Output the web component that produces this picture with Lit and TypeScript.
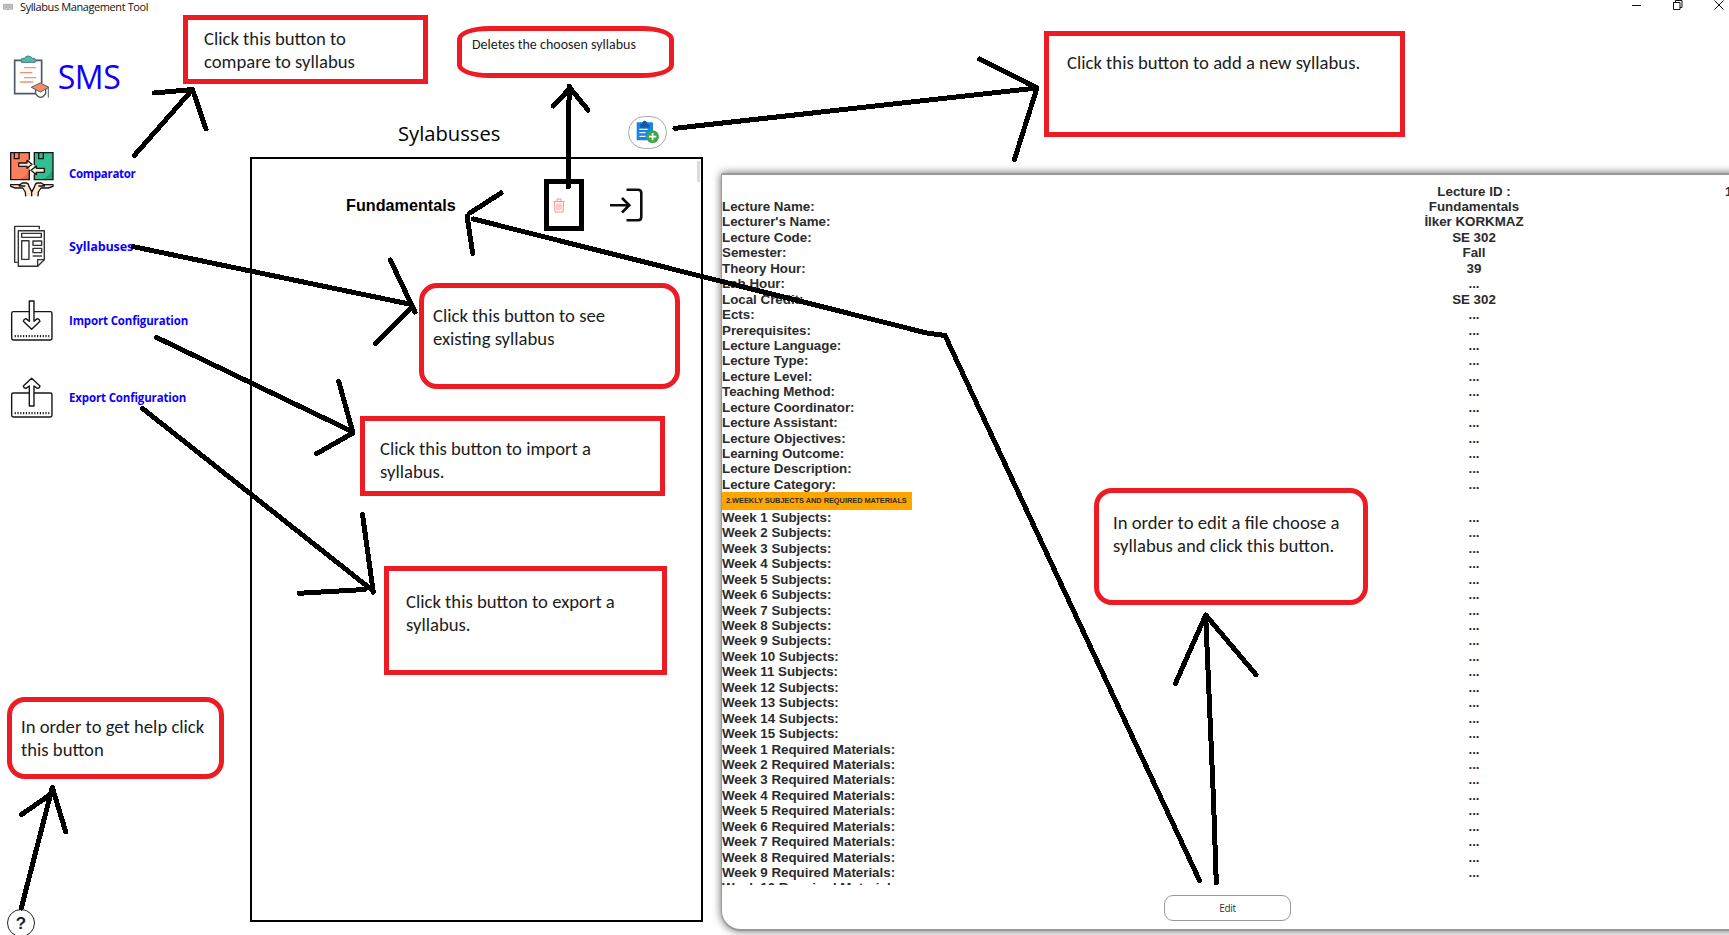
import { LitElement, html, css, svg } from "lit";
import { customElement } from "lit/decorators.js";
import { styleMap } from "lit/directives/style-map.js";

const DETAILS: [string, string][] = [
  ["", "Lecture ID :"],
  ["Lecture Name:", "Fundamentals"],
  ["Lecturer's Name:", "İlker KORKMAZ"],
  ["Lecture Code:", "SE 302"],
  ["Semester:", "Fall"],
  ["Theory Hour:", "39"],
  ["Lab Hour:", "..."],
  ["Local Credit:", "SE 302"],
  ...[
    "Ects:", "Prerequisites:", "Lecture Language:", "Lecture Type:", "Lecture Level:", "Teaching Method:",
    "Lecture Coordinator:", "Lecture Assistant:", "Lecture Objectives:", "Learning Outcome:",
    "Lecture Description:", "Lecture Category:",
  ].map((l): [string, string] => [l, "..."]),
];

const WEEKS: [string, string][] = [
  ...Array.from({ length: 15 }, (_, i): [string, string] => [`Week ${i + 1} Subjects:`, "..."]),
  ...Array.from({ length: 10 }, (_, i): [string, string] => [`Week ${i + 1} Required Materials:`, "..."]),
];

interface Note {
  x: number; y: number; w: number; h: number;
  tx: number; ty: number;
  radius?: string; small?: boolean; lines: string[];
}

// Boxes are placed freely on top of the window; tx/ty is the text inset inside the border.
const NOTES: Note[] = [
  { x: 183, y: 15, w: 245, h: 69, tx: 16, ty: 7, lines: ["Click this button to", "compare to syllabus"] },
  { x: 457, y: 26, w: 217, h: 52, tx: 10, ty: 5, radius: "32px / 13px", small: true, lines: ["Deletes the choosen syllabus"] },
  { x: 1044, y: 31, w: 361, h: 106, tx: 18, ty: 15, lines: ["Click this button to add a new syllabus."] },
  { x: 419, y: 283, w: 261, h: 106, tx: 9, ty: 16, radius: "18px", lines: ["Click this button to see", "existing syllabus"] },
  { x: 360, y: 416, w: 305, h: 80, tx: 15, ty: 16, lines: ["Click this button to import a", "syllabus."] },
  { x: 384, y: 566, w: 283, h: 109, tx: 17, ty: 19, lines: ["Click this button to export a", "syllabus."] },
  { x: 7, y: 697, w: 217, h: 82, tx: 9, ty: 13, radius: "18px", lines: ["In order to get help click", "this button"] },
  { x: 1094, y: 488, w: 274, h: 117, tx: 14, ty: 18, radius: "18px", lines: ["In order to edit a file choose a", "syllabus and click this button."] },
];

const STROKES = [
  "M134.3 155.5L192.5 89.500M154 93L192.5 89.500L206 129",
  "M568.3 187V135L569.3 86M553.3 106L569.3 89M570 88L588 110",
  "M675 128.3L1037 88M979.500 59L1037 88L1014.4 159.500",
  "M133.5 246.7L411.5 304.5M390.3 260L415 312M375.7 343.7L412 307.5",
  "M156.3 337.3L352 431.5M338.7 381.3L353 433L316.5 453.7",
  "M142.3 408.3L372 590M362.5 514.5L373.3 592.3M299 593.3L365 589.5",
  "M21.3 908L52.3 787.5M21.3 814.7L51 794M52.3 787.5L65.7 831.7",
  "M1216.3 883L1213.5 800L1205.7 615.500M1175.3 683.7L1205.7 615L1256 674.7",
  "M1199.6 880.7L945 335.500L926.7 333L473.3 219M501 193L470 213M467 216L472.7 253.3",
];

const bookIcon = html`<svg viewBox="0 0 10 8" width="10" height="8">
  <path d="M.5 1.500Q2.800 .6 5 1.600Q7.200 .6 9.500 1.500V6.400Q7.200 5.600 5 6.700Q2.800 5.600 .5 6.400Z" fill="#d4d4d4" stroke="#9a9a9a" stroke-width=".8"/>
  <path d="M5 1.600V6.700M1.800 2.900H3.900M1.800 4.400H3.900M6.100 2.900H8.200M6.100 4.400H8.200" stroke="#8c8c8c" stroke-width=".6"/>
</svg>`;

const logoIcon = html`<svg viewBox="36 165 112 132" width="37.3" height="44">
  <path d="M41 181H122V282H41Z" fill="#fff"/>
  <path d="M122 250V181H41V281H104" fill="none" stroke="#4c5a64" stroke-width="5"/>
  <path d="M61 187V178Q61 175 65 175H71Q73 168 82 168Q91 168 93 175H99Q103 175 103 178V187Z" fill="#58b9a9" stroke="#3f7f7c" stroke-width="3"/>
  <path d="M69 203H106M57 218H94M69 233H106M57 246H97" stroke="#f5906c" stroke-width="4"/>
  <path d="M104 263V281Q111 292 119 292Q127 292 134 281V263Z" fill="#fff" stroke="#4c5a64" stroke-width="4"/>
  <path d="M91 262L118 249L144 262L118 276Z" fill="#f58b67" stroke="#4c5a64" stroke-width="3"/>
  <path d="M142 263V293" stroke="#4c5a64" stroke-width="3"/>
</svg>`;

const compareIcon = html`<svg viewBox="27 450 138 138" width="46" height="46">
  <path d="M32 455H88V536H32Z" fill="#ff7f5c"/><path d="M88 500V536H52Q82 530 88 500Z" fill="#dd6a4e"/>
  <path d="M103 455H159V536H103Z" fill="#31c08d"/><path d="M159 495V536H122Q153 528 159 495Z" fill="#26a178"/>
  <path d="M88 476V455H32V536H88V506M103 492V455H159V536H103V520" fill="none" stroke="#161616" stroke-width="4"/>
  <path d="M43 456V473H57V456M116 456V473H130V456" fill="none" stroke="#161616" stroke-width="4"/>
  <path d="M56 486H81V478L96 490L81 502V496H56Z" fill="#fbe9d2" stroke="#161616" stroke-width="4" stroke-linejoin="round"/>
  <path d="M133 502H109V495L93 508L109 521V514H133Z" fill="#fbe9d2" stroke="#161616" stroke-width="4" stroke-linejoin="round"/>
  <path d="M77 586L76 573L68 561H46L32 556V551H60L67 546H80Q86 548 87 556L94 570V586" fill="#fbe9d2"/>
  <path d="M114 586L115 573L123 561H145L159 556V551H131L124 546H111Q105 548 104 556L97 570V586" fill="#fbe9d2"/>
  <path d="M77 586L76 573L68 561H46L32 556V551H60L67 546H80Q86 548 87 556L95 572V586M114 586L115 573L123 561H145L159 556V551H131L124 546H111Q105 548 104 556L96 572M56 555H76M135 555H115" fill="none" stroke="#161616" stroke-width="4" stroke-linejoin="round"/>
</svg>`;

const papersIcon = html`<svg viewBox="38 12 100 128" width="33.3" height="42.7" fill="none" stroke="#333" stroke-width="4.200" stroke-linejoin="round">
  <path d="M52 124H43V16H117V25"/>
  <path d="M54 29H132V116L112 136H54Z" fill="#fff"/>
  <path d="M132 116H112V136"/>
  <path d="M64 37H123V49H64ZM64 59H86V115H64ZM98 60H124V73H98ZM98 82H124V95H98Z"/>
  <path d="M97 105H125"/>
</svg>`;

const trayIcon = (up: boolean) => html`<svg viewBox="30 234 130 124" width="43.3" height="41.3" fill="none" stroke="#161616" stroke-width="4.200" stroke-linejoin="round">
  ${up
    ? svg`<rect x="35" y="282" width="121" height="72" rx="5"/>
       <path d="M95 238L120 261Q119 268 112 268L102 261V321H88V261L78 268Q71 268 70 261Z" fill="#fff"/>`
    : svg`<rect x="35" y="269" width="121" height="85" rx="5"/>
       <path d="M88 237H102V298L112 290Q119 291 120 298L95 322L70 298Q71 291 78 290L88 298Z" fill="#fff"/>`}
  <path d="M44 342.500H148" stroke-width="7" stroke-dasharray="3.500 4.900"/>
</svg>`;

const addIcon = html`<svg viewBox="584 362 76 72" width="25.3" height="24">
  <rect x="589" y="369" width="49" height="54" rx="3" fill="#1c83e0"/>
  <path d="M599 385V375H604Q606 364 613 364Q620 364 622 375H627V385Z" fill="#1459ab"/>
  <path d="M597 390H622M597 400H616M597 411H616" stroke="#e6f2ff" stroke-width="4"/>
  <circle cx="637" cy="412" r="19" fill="#3fa548"/>
  <path d="M637 401V423M626 412H648" stroke="#fff" stroke-width="5"/>
</svg>`;

const trashIcon = html`<svg viewBox="0 0 12 15" width="12" height="15" fill="none" stroke="#ff8f8f" stroke-width="1">
  <path d="M.5 3.500H11.500M4 3V1H8V3M1.500 4L2 14H10L10.500 4"/>
  <path d="M4 5.500V12M6 5.500V12M8 5.500V12"/>
</svg>`;

const enterIcon = html`<svg viewBox="0 0 34 34" width="34" height="34" fill="none" stroke="#0c0c0c" stroke-width="2.600">
  <path d="M1 17.300H20M13 10L20.300 17.300L13 24.500"/>
  <path d="M17.500 1.800H29Q32.300 1.800 32.300 5V29Q32.300 32.300 29 32.300H17.500"/>
</svg>`;

@customElement("app-root")
export class AppRoot extends LitElement {
  static styles = css`
    :host {
      display: flex;
      flex-direction: column;
      position: relative;
      width: 1729px;
      height: 935px;
      overflow: hidden;
      background: #fff;
      color: #000;
      font-family: "Segoe UI", "Open Sans", "Noto Sans", sans-serif;
    }
    * { box-sizing: border-box; }
    svg { display: block; flex: none; }
    button { font: inherit; background: none; border: 0; padding: 0; margin: 0; color: inherit; }

    .titlebar { display: flex; align-items: center; height: 14px; flex: none; padding-left: 3px; font-size: 11px; letter-spacing: -0.4px; color: #111; }
    .titlebar .name { margin-left: 7px; line-height: 14px; flex: 1; }
    .controls { display: flex; gap: 31px; padding-right: 5px; margin-top: -4px; }

    .body { display: flex; flex: 1; min-height: 0; }
    .side { width: 250px; flex: none; display: flex; flex-direction: column; color: #0d00ff; }
    .brand { display: flex; align-items: center; gap: 8px; padding: 41px 0 0 12.500px; height: 85px; font-size: 32px; letter-spacing: -0.5px; line-height: 44px; }
    .nav { display: flex; flex-direction: column; padding-top: 38px; }
    .item { display: flex; align-items: center; font-weight: 700; font-size: 11.5px; letter-spacing: -0.15px; line-height: 16px; text-align: left; height: 74px; }
    .item.first { height: 73px; }
    .item.first .glyph { padding-left: 9px; }
    .item.first .title { letter-spacing: -0.3px; }
    .item.large { font-size: 12.600px; }
    .item.large .glyph { padding: 0 0 1px 12.700px; }
    .item.last { height: 79px; }
    .glyph { width: 69px; padding-left: 10px; flex: none; }
    .help { margin: auto 0 -2px 7px; width: 28px; height: 28px; border: 1.500px solid #222; border-radius: 50%; background: #fff; color: #222; font: 700 17px/25px "Liberation Sans", sans-serif; text-align: center; }

    .list { width: 453px; flex: none; display: flex; flex-direction: column; }
    .heading { display: flex; align-items: center; height: 143px; padding: 94px 0 0 148px; font-size: 20.200px; line-height: 28px; }
    .heading .caption { width: 230px; }
    .add { width: 39px; height: 33px; margin-top: -1px; border: 1px solid #a8a8a8; border-radius: 17px; display: flex; align-items: center; justify-content: center; }
    .frame { height: 765px; border: 2px solid #000; position: relative; }
    .entry { display: flex; align-items: center; height: 92px; padding-left: 94px; font: 700 16.200px/20px "Liberation Sans", sans-serif; }
    .entry .label { width: 198px; }
    .trash { width: 40px; height: 52px; border: 5px solid #000; display: flex; align-items: center; padding-left: 4px; background: #fff; }
    .enter { margin-left: 25px; }
    .thumb { position: absolute; right: 1px; top: 2px; width: 3px; height: 21px; background: #dcdcdc; }

    .panel { margin: 159px 0 4px 18px; width: 1020px; flex: none; border: 1px solid #999; border-top-width: 2px; border-bottom-width: 2px; border-radius: 2px 0 0 20px; box-shadow: 0 0 8px rgba(0, 0, 0, 0.6); background: #fff; display: flex; flex-direction: column; }
    .sheet { height: 710px; overflow: hidden; padding-top: 8.600px; font: 700 13.333px/15.440px "Liberation Sans", sans-serif; color: #2b2b2b; }
    .row { display: grid; grid-template-columns: 505px 494px 20px; height: 15.440px; white-space: nowrap; }
    .row .value { text-align: center; }
    .row .page { padding-left: 4px; }
    .band { width: 190px; height: 18px; margin: -0.600px 0 0.200px; background: #ffa500; font-size: 7.350px; line-height: 18px; padding-left: 4px; white-space: nowrap; }
    .edit { margin: 10px 0 0 442px; width: 127px; height: 26px; border: 1px solid #999; border-radius: 9px; font-size: 10px; letter-spacing: -0.3px; color: #333; text-align: center; }

    .note { position: absolute; border: 5px solid #ed1c24; font: 18.667px/23px Carlito, Calibri, Lato, sans-serif; color: #1c1c1c; white-space: nowrap; }
    .note.small { font-size: 14px; line-height: 17px; }
    .ink { position: absolute; left: 0; top: 0; pointer-events: none; fill: none; stroke: #000; stroke-width: 5; stroke-linecap: round; stroke-linejoin: round; shape-rendering: crispEdges; }
  `;

  private row([label, value]: [string, string], page = "") {
    return html`<div class="row"><span>${label}</span><span class="value">${value}</span><span class="page">${page}</span></div>`;
  }

  render() {
    return html`
      <header class="titlebar">
        ${bookIcon}<span class="name">Syllabus Management Tool</span>
        <span class="controls">
          <svg width="10" height="10" viewBox="0 0 10 10"><path d="M0 5.500H9" stroke="#111"/></svg>
          <svg width="10" height="10" viewBox="0 0 10 10" fill="none" stroke="#111"><path d="M.5 2.500H7V9.500H.5ZM2.500 2.500V.5H9V7.500H7"/></svg>
          <svg width="10" height="10" viewBox="0 0 10 10"><path d="M.5 .5L9.500 9.500M9.500 .5L.5 9.500" stroke="#111"/></svg>
        </span>
      </header>
      <div class="body">
        <aside class="side">
          <div class="brand">${logoIcon}<span>SMS</span></div>
          <nav class="nav">
            <button class="item first"><span class="glyph">${compareIcon}</span><span class="title">Comparator</span></button>
            <button class="item large"><span class="glyph">${papersIcon}</span><span class="title">Syllabuses</span></button>
            <button class="item"><span class="glyph">${trayIcon(false)}</span><span class="title">Import Configuration</span></button>
            <button class="item last"><span class="glyph">${trayIcon(true)}</span><span class="title">Export Configuration</span></button>
          </nav>
          <button class="help">?</button>
        </aside>
        <section class="list">
          <div class="heading"><span class="caption">Sylabusses</span><button class="add">${addIcon}</button></div>
          <div class="frame">
            <div class="entry">
              <span class="label">Fundamentals</span>
              <button class="trash">${trashIcon}</button>
              <button class="enter">${enterIcon}</button>
            </div>
            <div class="thumb"></div>
          </div>
        </section>
        <section class="panel">
          <div class="sheet">
            ${DETAILS.map((d, i) => this.row(d, i === 0 ? "1" : ""))}
            <div class="band">2.WEEKLY SUBJECTS AND REQUIRED MATERIALS</div>
            ${WEEKS.map((w) => this.row(w))}
          </div>
          <button class="edit">Edit</button>
        </section>
      </div>
      ${NOTES.map((n) => html`<div
        class=${n.small ? "note small" : "note"}
        style=${styleMap({
          left: `${n.x}px`, top: `${n.y}px`, width: `${n.w}px`, height: `${n.h}px`,
          padding: `${n.ty}px 0 0 ${n.tx}px`, borderRadius: n.radius ?? "0",
        })}
      >${n.lines.map((l) => html`<div>${l}</div>`)}</div>`)}
      <svg class="ink" width="1729" height="935" viewBox="0 0 1729 935">
        ${STROKES.map((d) => svg`<path d=${d}/>`)}
      </svg>
    `;
  }
}
